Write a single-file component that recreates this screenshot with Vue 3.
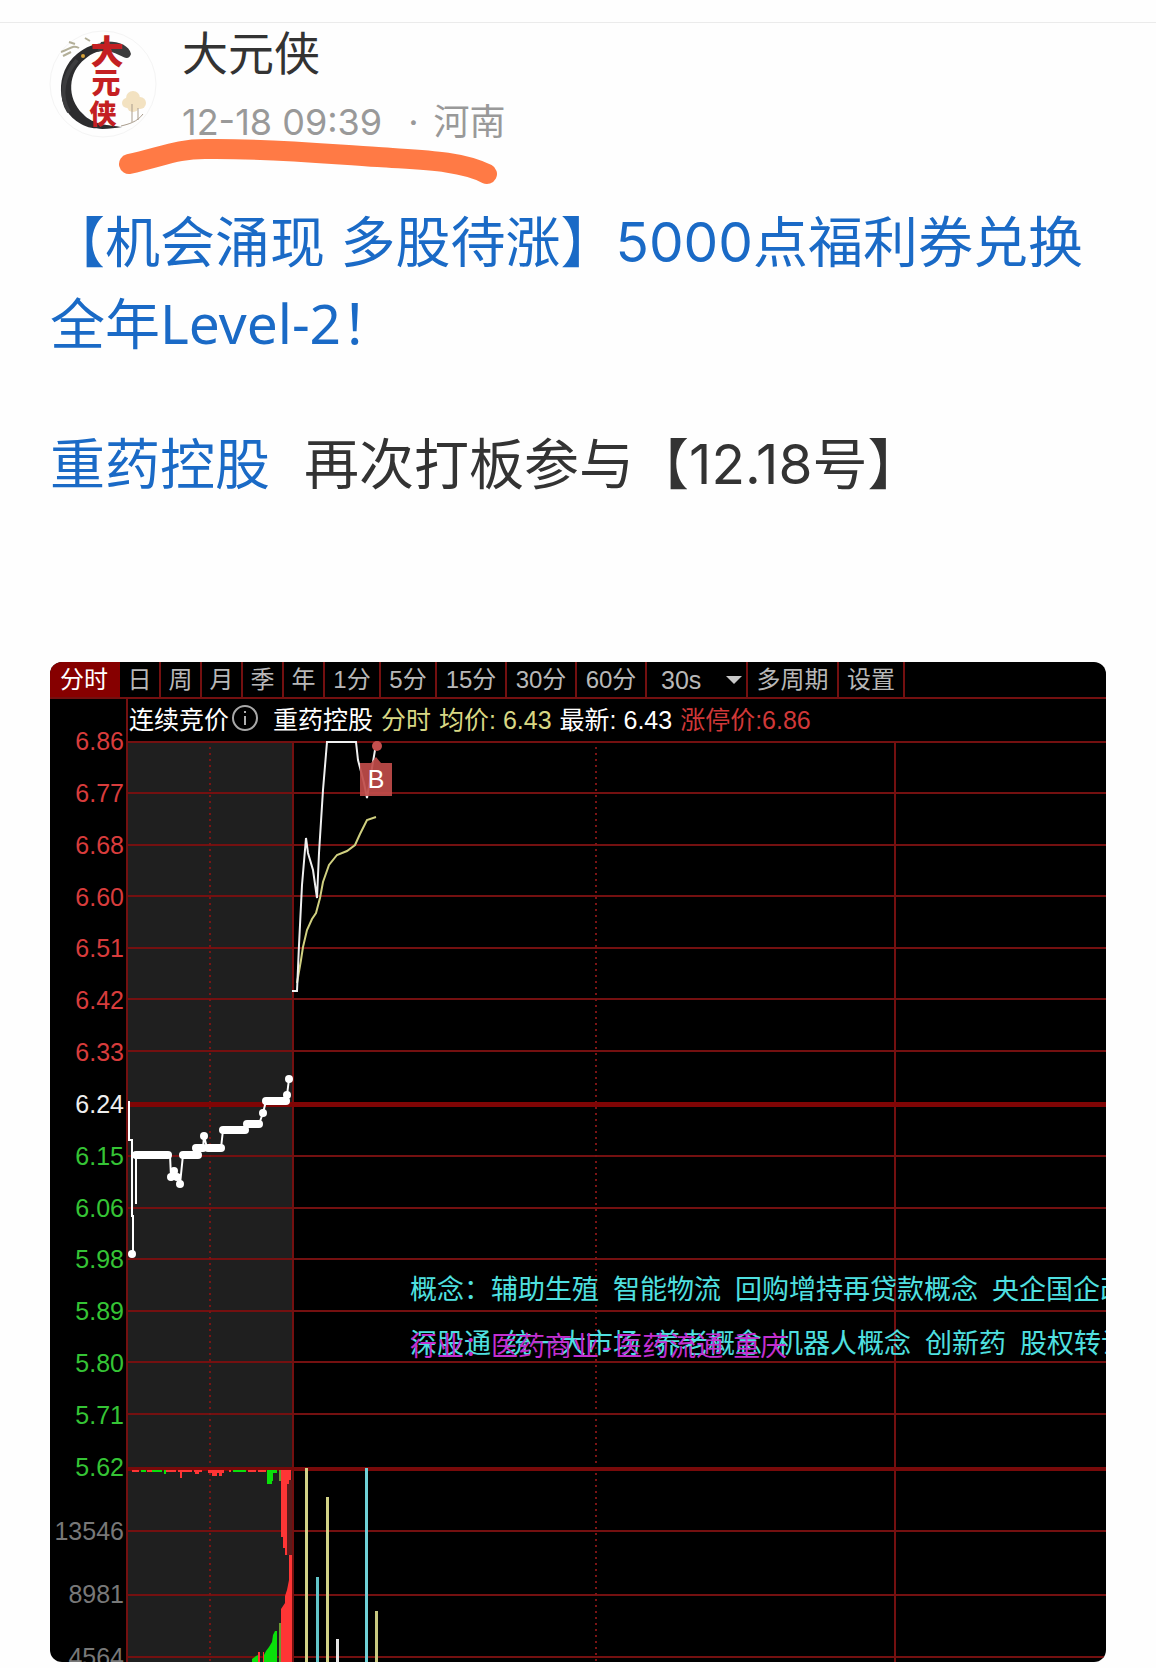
<script setup>
const periods = [
  { label: '分时', size: 'first', active: true },
  { label: '日', size: 'small' },
  { label: '周', size: 'small' },
  { label: '月', size: 'small' },
  { label: '季', size: 'small' },
  { label: '年', size: 'small' },
  { label: '1分', size: 'medium' },
  { label: '5分', size: 'medium' },
  { label: '15分', size: 'large' },
  { label: '30分', size: 'large' },
  { label: '60分', size: 'large' },
]

const prices = [
  '6.86', '6.77', '6.68', '6.60', '6.51', '6.42', '6.33', '6.24',
  '6.15', '6.06', '5.98', '5.89', '5.80', '5.71', '5.62',
]
const priceTone = (i) => (i < 7 ? 'up' : i === 7 ? 'flat' : 'down')
const volumes = ['13546', '8981', '4564']

const gridLines = [1, 52, 104, 155, 207, 258, 310, 415, 467, 518, 570, 621, 673, 790, 854, 916]

const concepts = [
  ['概念：辅助生殖', '智能物流', '回购增持再贷款概念', '央企国企改革'],
  ['深股通', '统一大市场', '养老概念', '机器人概念', '创新药', '股权转让'],
]
const industry = ['行业：医药商业-医药流通', '重庆']

const thickRuns = [
  [8, 40, 415], [55, 70, 415], [68, 75, 408], [80, 93, 408],
  [95, 117, 390], [119, 131, 384], [138, 158, 361],
]
const dots = [
  [4, 514], [43, 437], [46, 431], [49, 437], [52, 444],
  [76, 396], [135, 373], [159, 355], [161, 339],
]
const ticks = [
  [4, 7, 2, 'r'], [13, 5, 2, 'g'], [19, 5, 2, 'r'], [24, 10, 2, 'g'], [36, 2, 4, 'g'],
  [38, 10, 2, 'r'], [50, 14, 2, 'r'], [52, 2, 8, 'r'], [66, 8, 2, 'r'], [67, 4, 4, 'r'],
  [80, 16, 3, 'r'], [84, 5, 6, 'r'], [91, 3, 6, 'r'], [101, 2, 2, 'r'], [105, 13, 2, 'g'],
  [120, 8, 2, 'r'], [130, 8, 2, 'r'], [139, 10, 3, 'g'], [139, 5, 14, 'g'], [144, 1, 11, 'g'],
  [151, 2, 11, 'o'],
]
const bars = [
  [177, 728, '#d2d287'], [188, 837, '#62c4c8'], [198, 757, '#d2d287'],
  [208, 899, '#e6e6e6'], [237, 728, '#6fd0d6'], [247, 871, '#c8c880'],
]
</script>

<template>
  <article class="post">
    <header class="author">
      <svg class="avatar" viewBox="0 0 108 108" role="img" aria-label="大元侠">
        <circle cx="54" cy="54" r="53" fill="#fefefe" stroke="#f4f4f4" />
        <path d="M80 26 C74 10 46 8 28 24 C6 42 6 80 32 94 C44 101 60 99 73 97 C60 95 44 95 34 84 C17 68 19 42 36 29 C48 18 66 17 80 26Z" fill="#2c2c2e" />
        <path d="M52 12 C66 10 80 14 82 24 C80 30 76 28 70 25 C62 21 56 20 48 22Z" fill="#3b3b3c" />
        <path d="M28 30 C14 46 10 66 20 82" fill="none" stroke="#3c3c3e" stroke-width="4" />
        <path d="M12 22 C20 20 24 14 30 18 M20 12 l6 2 M36 8 l5 3 M14 26 l8 -4" fill="none" stroke="#b3af98" stroke-width="2" />
        <circle cx="34" cy="26" r="2" fill="#d4a038" />
        <g fill="#ecd09a" opacity=".6">
          <circle cx="84" cy="68" r="7" /><circle cx="78" cy="73" r="5" />
          <circle cx="91" cy="73" r="6" /><circle cx="84" cy="76" r="6" />
        </g>
        <path d="M83 92 V74 M89 90 V78 M72 96 C80 94 88 92 94 84" fill="none" stroke="#a99c8c" stroke-width="1" />
        <g class="seal" text-anchor="middle">
          <text x="58" y="34" font-size="33">大</text>
          <text x="57" y="64" font-size="29">元</text>
          <text x="54" y="94" font-size="27">侠</text>
        </g>
      </svg>
      <div class="meta">
        <h1 class="name">大元侠</h1>
        <p class="stamp"><time>12-18 09:39</time><span class="sep">·</span><span>河南</span></p>
      </div>
      <svg class="mark" viewBox="0 0 400 60" aria-hidden="true">
        <path d="M21 30 C56 22 70 15 97 15 C160 14 220 20 270 23 C310 26 352 26 379 40" fill="none" stroke="#ff7a45" stroke-width="20" stroke-linecap="round" />
      </svg>
    </header>

    <p class="line"><a href="#">【机会涌现&nbsp;多股待涨】5000点福利券兑换全年<span class="word">Level-2</span>！</a></p>
    <p class="line second"><a href="#">重药控股</a><span class="said">再次打板参与【12.18号】</span></p>

    <section class="panel">
      <nav class="tabs">
        <button v-for="p in periods" :key="p.label" type="button" :class="['tab', p.size, { active: p.active }]">{{ p.label }}</button>
        <span class="tab pick">
          <select aria-label="周期">
            <option>30s</option>
          </select>
          <svg class="caret" width="16" height="8" viewBox="0 0 16 8" aria-hidden="true"><path d="M0 0H16L8 8Z" fill="#c8c8c8" /></svg>
        </span>
        <button type="button" class="tab multi">多周期</button>
        <button type="button" class="tab setup">设置</button>
      </nav>

      <div class="body">
        <div class="axis">
          <ul class="scale price">
            <li v-for="(p, i) in prices" :key="p" :class="priceTone(i)">{{ p }}</li>
          </ul>
          <ul class="scale volume">
            <li v-for="v in volumes" :key="v">{{ v }}</li>
          </ul>
        </div>

        <div class="chart">
          <div class="info">
            <span>连续竞价</span>
            <svg class="hint" width="28" height="28" viewBox="0 0 28 28" aria-hidden="true">
              <circle cx="14" cy="14" r="12" fill="none" stroke="#a8a8a8" stroke-width="2" />
              <path d="M14 7V9M14 12V21" stroke="#b0b0b0" stroke-width="2" />
            </svg>
            <span class="stock">重药控股</span>
            <span class="avg">分时</span>
            <span class="avg">均价: 6.43</span>
            <span>最新: 6.43</span>
            <span class="limit">涨停价:6.86</span>
          </div>

          <div class="plot">
            <svg class="canvas" width="100%" height="922" role="img" aria-label="重药控股 分时">
              <rect x="0" y="2" width="164" height="920" fill="#1f1f1f" />
              <g fill="#741010">
                <rect v-for="y in gridLines" :key="y" x="0" :y="y" width="100%" height="2" />
                <rect x="164" y="1" width="2" height="921" />
                <rect x="766" y="1" width="2" height="921" />
              </g>
              <g stroke="#7a1414" stroke-width="2" stroke-dasharray="2 4">
                <path d="M82 7V922" />
                <path d="M468 7V922" />
              </g>
              <rect x="0" y="362" width="100%" height="5" fill="#800505" />
              <rect x="0" y="727" width="100%" height="4" fill="#780a0a" />

              <path d="M169 243L173 220L175 207L179 190L184 179L188 173L192 158L195 142L201 125L209 115L219 111L227 105L232 94L239 80L248 77" fill="none" stroke="#d0d080" stroke-width="2" />
              <path d="M164 251H169L171 205L174 145L178 98L180 113L185 130L189 158L191 113L195 50L199 2H228L230 20L236 43L239 58L247 10" fill="none" stroke="#f0f0f0" stroke-width="2" />

              <circle cx="249" cy="6" r="5" fill="#c4504e" />
              <path d="M232 23H243L248 17L253 23H264V56H232Z" fill="#c04c4a" opacity=".92" />
              <text class="buy" x="248" y="48" text-anchor="middle">B</text>

              <g fill="none" stroke="#fff" stroke-width="2">
                <path d="M1 361V400H4V476H5V514M7 463H8V415M42 415L43 437M52 444L55 415M75 408L76 396L79 408M93 408L95 390M131 384L135 373L138 361M159 355L161 339" />
                <path v-for="r in thickRuns" :key="r.join()" :d="`M${r[0]} ${r[2]}H${r[1]}`" stroke-width="8" stroke-linecap="round" />
              </g>
              <circle v-for="d in dots" :key="d.join()" :cx="d[0]" :cy="d[1]" r="4" fill="#fff" />

              <rect v-for="t in ticks" :key="t.join()" :x="t[0]" y="730" :width="t[1]" :height="t[2]" :class="t[3]" />
              <path d="M159 740H164V815H159Z" fill="#5a1c1c" />
              <path d="M153 730H163V740H161V744H159V815H157V808H155V797H153Z" class="r" />
              <path d="M161 815H164V922H153V869L157 863V856L159 850L161 840Z" class="r" />
              <path d="M149 891H147L145 895L144 902L141 907L138 911L136 915V922H149Z" class="g" />
              <path d="M151 883H153V922H151Z" class="o" />
              <path d="M124 922V919L128 916L130 915V922Z" class="g" />
              <path d="M130 912H132V922H130ZM135 912H136V922H135Z" class="r" />
              <rect v-for="b in bars" :key="b[0]" :x="b[0]" :y="b[1]" width="3" height="200" :fill="b[2]" />
            </svg>

            <div class="notes">
              <p v-for="row in concepts" :key="row[0]"><span v-for="c in row" :key="c">{{ c }}</span></p>
            </div>
            <p class="industry"><span v-for="c in industry" :key="c">{{ c }}</span></p>
          </div>
        </div>
      </div>
    </section>
  </article>
</template>

<style>
body {
  margin: 0;
  background: #fefefe;
}
</style>

<style scoped>
* {
  box-sizing: border-box;
}
p,
h1,
ul {
  margin: 0;
  padding: 0;
}
.post {
  margin-top: 22px;
  padding: 0 50px 6px;
  border-top: 1px solid #ebebeb;
  font-family: "Inter", "Noto Sans CJK SC", sans-serif;
}
.author {
  position: relative;
  display: flex;
  gap: 25px;
  height: 178px;
}
.avatar {
  width: 108px;
  height: 108px;
  margin: 7px 0 0 -1px;
}
.seal {
  font-family: "Noto Sans CJK SC", sans-serif;
  font-weight: 900;
  fill: #c41f22;
}
.name {
  font-size: 46px;
  font-weight: 400;
  line-height: 60px;
  color: #333;
}
.stamp {
  display: flex;
  margin-top: 13px;
  font-size: 36px;
  line-height: 52px;
  color: #999;
}
.sep {
  margin: 0 15px 0 26px;
}
.mark {
  position: absolute;
  left: 58px;
  top: 111px;
  width: 400px;
  height: 60px;
}
.line {
  font-size: 55px;
  line-height: 82px;
  color: #333;
}
.line a {
  color: #1a6ac6;
  text-decoration: none;
}
.word {
  font-family: "Noto Sans", sans-serif;
  line-height: 1;
}
.second {
  margin-top: 58px;
}
.said {
  margin-left: 34px;
}
.panel {
  margin-top: 157px;
  overflow: hidden;
  border-radius: 12px;
  background: #000;
  color: #fff;
  font-family: "Liberation Sans", "Noto Sans CJK SC", sans-serif;
  font-size: 24px;
}
.tabs {
  display: flex;
  height: 37px;
  border-bottom: 2px solid #741010;
}
.tab {
  flex: none;
  padding: 0;
  border: 0;
  border-right: 2px solid #741010;
  background: none;
  color: #b8b8b8;
  font: inherit;
  line-height: 34px;
  white-space: nowrap;
}
.first {
  width: 70px;
}
.active {
  border-color: #860000;
  background: #860000;
  color: #fff;
}
.small {
  width: 41px;
}
.medium {
  width: 56px;
}
.large {
  width: 70px;
}
.pick {
  display: flex;
  align-items: center;
  width: 101px;
  padding: 0 4px 0 14px;
}
.pick select {
  flex: 1;
  min-width: 0;
  padding: 0;
  border: 0;
  appearance: none;
  background: none;
  color: inherit;
  font: inherit;
  font-size: 25px;
}
.multi {
  width: 91px;
}
.setup {
  width: 66px;
}
.body {
  display: grid;
  grid-template-columns: 76px minmax(0, 1fr);
}
.axis {
  padding: 28px 2px 0 0;
  height: 963px;
  font-size: 25px;
  line-height: 28px;
  text-align: right;
}
.scale {
  display: flex;
  flex-direction: column;
  justify-content: space-between;
  list-style: none;
}
.price {
  height: 754px;
}
.volume {
  height: 154px;
  margin-top: 36px;
  color: #787878;
}
.up {
  color: #d83c3c;
}
.flat {
  color: #eee;
}
.down {
  color: #35c435;
}
.chart {
  border-left: 2px solid #741010;
}
.info {
  display: flex;
  align-items: center;
  gap: 8px;
  height: 41px;
  padding: 0 0 4px 1px;
  font-size: 25px;
  white-space: nowrap;
}
.hint {
  margin: 0 0 0 -6px;
}
.stock {
  margin-left: 6px;
}
.avg {
  color: #d8d884;
}
.limit {
  color: #d03838;
}
.plot {
  position: relative;
  overflow: hidden;
}
.canvas {
  display: block;
}
.buy {
  fill: #fff;
  font-size: 25px;
}
.r {
  fill: #ff3535;
}
.g {
  fill: #0ae00a;
}
.o {
  fill: #6a9a30;
}
.notes,
.industry {
  position: absolute;
  left: 282px;
  font-size: 27px;
  line-height: 54px;
  white-space: nowrap;
}
.notes {
  top: 523px;
  color: #4fe0e0;
}
.notes p {
  display: flex;
  gap: 14px;
}
.industry {
  display: flex;
  gap: 10px;
  top: 582px;
  font-family: "Liberation Mono", "Noto Sans CJK SC", monospace;
  color: #c32fd0;
}
</style>
